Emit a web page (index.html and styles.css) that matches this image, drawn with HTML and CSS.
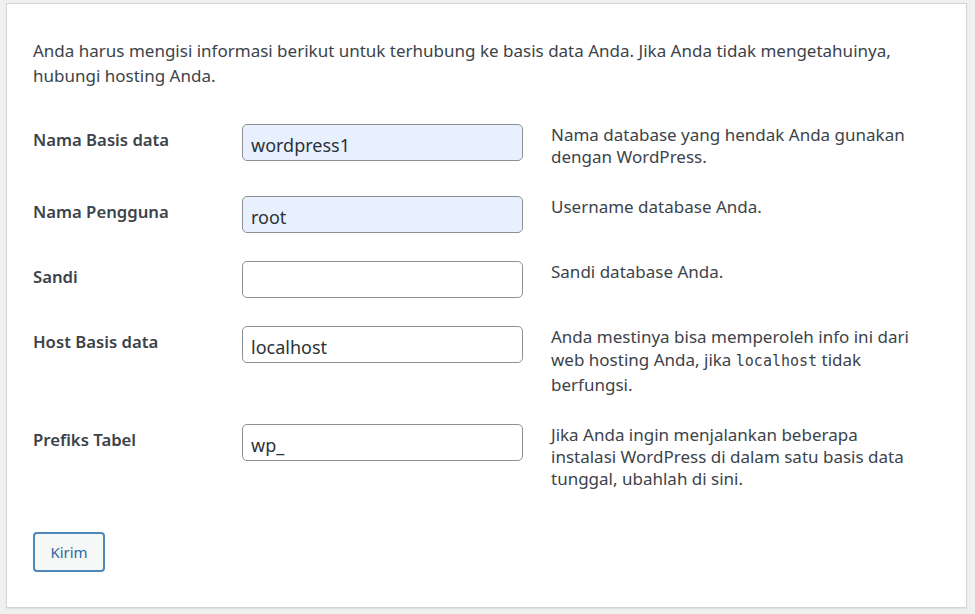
FILE: index.html
```html
<!DOCTYPE html>
<html lang="id">
<head>
<meta charset="utf-8">
<title>Pengaturan Basis Data</title>
<link rel="stylesheet" href="styles.css">
</head>
<body>
<form class="card">
  <p class="intro">Anda harus mengisi informasi berikut untuk terhubung ke basis data Anda. Jika Anda tidak mengetahuinya, hubungi hosting Anda.</p>
  <div class="table">
    <div class="row">
      <label class="label" for="dbname">Nama Basis data</label>
      <input class="field autofill" id="dbname" type="text" value="wordpress1">
      <p class="desc">Nama database yang hendak Anda gunakan dengan WordPress.</p>
    </div>
    <div class="row">
      <label class="label" for="uname">Nama Pengguna</label>
      <input class="field autofill" id="uname" type="text" value="root">
      <p class="desc">Username database Anda.</p>
    </div>
    <div class="row">
      <label class="label" for="pwd">Sandi</label>
      <input class="field" id="pwd" type="text" value="">
      <p class="desc">Sandi database Anda.</p>
    </div>
    <div class="row">
      <label class="label" for="dbhost">Host Basis data</label>
      <input class="field" id="dbhost" type="text" value="localhost">
      <p class="desc">Anda mestinya bisa memperoleh info ini dari web hosting Anda, jika <code>localhost</code> tidak berfungsi.</p>
    </div>
    <div class="row">
      <label class="label" for="prefix">Prefiks Tabel</label>
      <input class="field" id="prefix" type="text" value="wp_">
      <p class="desc">Jika Anda ingin menjalankan beberapa instalasi WordPress di dalam satu basis data tunggal, ubahlah di sini.</p>
    </div>
  </div>
  <div class="actions">
    <button class="btn" type="button">Kirim</button>
  </div>
</form>
</body>
</html>
```

FILE: styles.css
```css
html, body {
  margin: 0;
  padding: 0;
  background: #f0f0f1;
}
body {
  padding: 3px 8px 6px 6px;
  font-family: "Noto Sans", "Open Sans", sans-serif;
  color: #3c434a;
  font-size: 17px;
}
.card {
  box-sizing: border-box;
  width: 961px;
  height: 605px;
  background: #fff;
  border: 1px solid #d4d4d6;
  box-shadow: 0 1px 1px rgba(0,0,0,0.06);
  padding: 34px 26px 0 26px;
}
.intro {
  margin: 0;
  line-height: 25px;
  width: 880px;
}
.table {
  margin-top: 22px;
  display: flex;
  flex-direction: column;
}
.row {
  display: grid;
  grid-template-columns: 181px 281px 1fr;
  column-gap: 28px;
  padding: 14px 0;
  align-items: start;
}
.label {
  font-weight: 600;
  font-size: 16.7px;
  line-height: 25px;
  padding-top: 3px;
}
.field {
  box-sizing: border-box;
  width: 281px;
  height: 37px;
  margin: 0;
  border: 1px solid #8c8f94;
  border-radius: 5px;
  background: #fff;
  font-family: inherit;
  font-size: 18px;
  color: #2c3338;
  padding: 4px 8px 0 8px;
}
.field.autofill {
  background: #e8f0fe;
}
.desc {
  margin: 0;
  line-height: 22px;
  font-size: 17px;
  max-width: 368px;
}
code {
  display: inline-block;
  font-family: "DejaVu Sans Mono", "Liberation Mono", monospace;
  font-size: 15px;
  line-height: 26px;
}
.actions {
  margin-top: 28px;
}
.btn {
  box-sizing: border-box;
  width: 72px;
  height: 40px;
  border: 2px solid #4f87b8;
  border-radius: 4px;
  background: #f6f7f7;
  color: #2d6aa5;
  font-family: inherit;
  font-size: 15px;
}
```
